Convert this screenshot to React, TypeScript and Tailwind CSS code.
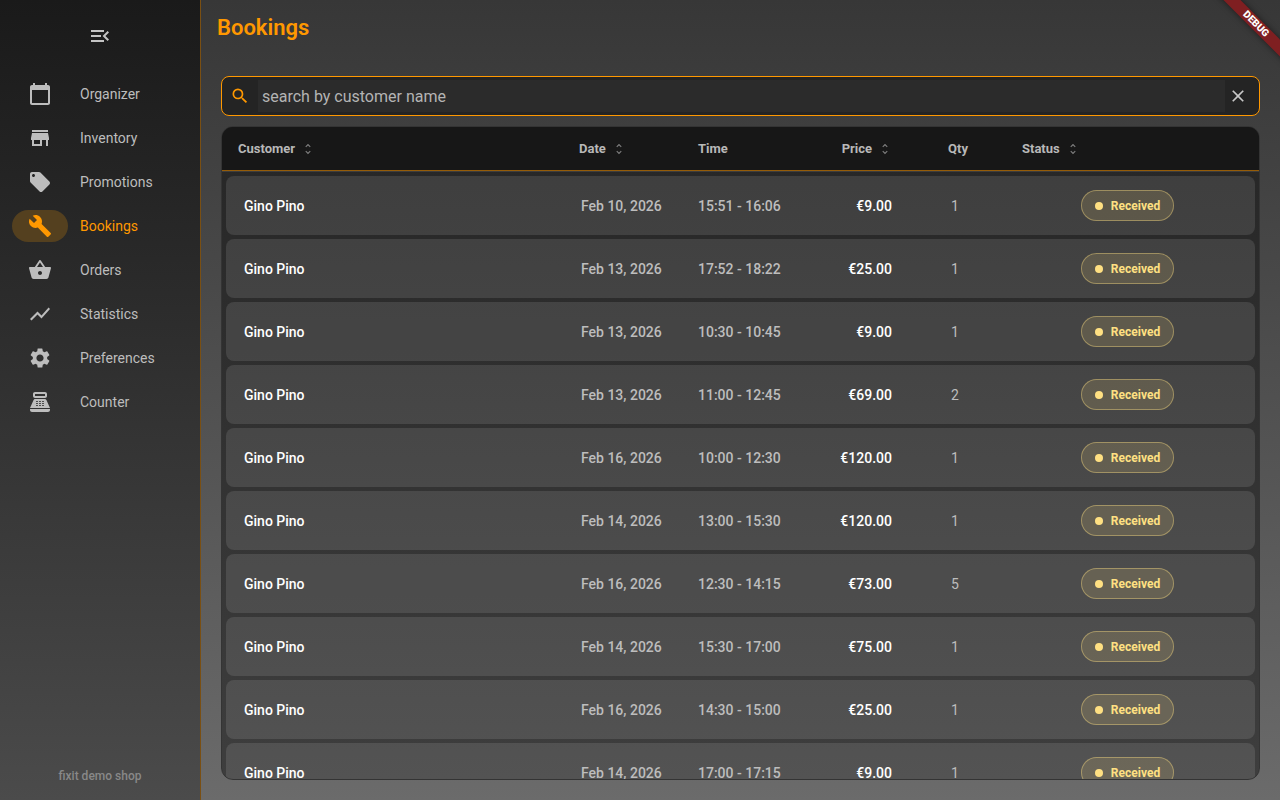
import type { IconType } from "react-icons";
import {
  MdBuild,
  MdCalendarToday,
  MdClose,
  MdLocalOffer,
  MdMenuOpen,
  MdPointOfSale,
  MdSearch,
  MdSettings,
  MdShoppingBasket,
  MdShowChart,
  MdStore,
  MdUnfoldMore,
} from "react-icons/md";

type TBooking = {
  customer: string;
  date: string;
  time: string;
  price: string;
  qty: number;
  status: string;
};

const navItems: { label: string; icon: IconType; active?: boolean }[] = [
  { label: "Organizer", icon: MdCalendarToday },
  { label: "Inventory", icon: MdStore },
  { label: "Promotions", icon: MdLocalOffer },
  { label: "Bookings", icon: MdBuild, active: true },
  { label: "Orders", icon: MdShoppingBasket },
  { label: "Statistics", icon: MdShowChart },
  { label: "Preferences", icon: MdSettings },
  { label: "Counter", icon: MdPointOfSale },
];

const bookings: TBooking[] = [
  { customer: "Gino Pino", date: "Feb 10, 2026", time: "15:51 - 16:06", price: "€9.00", qty: 1, status: "Received" },
  { customer: "Gino Pino", date: "Feb 13, 2026", time: "17:52 - 18:22", price: "€25.00", qty: 1, status: "Received" },
  { customer: "Gino Pino", date: "Feb 13, 2026", time: "10:30 - 10:45", price: "€9.00", qty: 1, status: "Received" },
  { customer: "Gino Pino", date: "Feb 13, 2026", time: "11:00 - 12:45", price: "€69.00", qty: 2, status: "Received" },
  { customer: "Gino Pino", date: "Feb 16, 2026", time: "10:00 - 12:30", price: "€120.00", qty: 1, status: "Received" },
  { customer: "Gino Pino", date: "Feb 14, 2026", time: "13:00 - 15:30", price: "€120.00", qty: 1, status: "Received" },
  { customer: "Gino Pino", date: "Feb 16, 2026", time: "12:30 - 14:15", price: "€73.00", qty: 5, status: "Received" },
  { customer: "Gino Pino", date: "Feb 14, 2026", time: "15:30 - 17:00", price: "€75.00", qty: 1, status: "Received" },
  { customer: "Gino Pino", date: "Feb 16, 2026", time: "14:30 - 15:00", price: "€25.00", qty: 1, status: "Received" },
  { customer: "Gino Pino", date: "Feb 14, 2026", time: "17:00 - 17:15", price: "€9.00", qty: 1, status: "Received" },
];

// header and body rows share the same columns
const columns =
  "grid grid-cols-[341fr_119fr_102fr_92fr_120fr_231fr] items-center";

const SortButton = ({ label }: { label: string }) => (
  <button type="button" className="inline-flex items-center gap-1.5">
    {label}
    <MdUnfoldMore className="size-3.5 text-[#7c7c7c]" />
  </button>
);

const Sidebar = () => {
  return (
    <aside className="flex w-[201px] shrink-0 flex-col border-r border-[#7a4f12] bg-linear-to-b from-[#1a1a1a] to-[#4b4b4b]">
      <button
        type="button"
        aria-label="Collapse menu"
        className="mx-auto mt-6 text-[#c4c4c4]"
      >
        <MdMenuOpen className="size-6" />
      </button>
      <nav className="mt-6 flex flex-col">
        {navItems.map(({ label, icon: Icon, active }) => (
          <a
            key={label}
            href="#"
            className={`flex h-11 items-center gap-3 pl-3 text-sm ${
              active ? "text-[#ff9800]" : "text-[#bdbdbd]"
            }`}
          >
            <span
              className={`flex h-8 w-14 items-center justify-center rounded-full ${
                active ? "bg-[#54401f]" : ""
              }`}
            >
              <Icon className="size-6" />
            </span>
            {label}
          </a>
        ))}
      </nav>
      <p className="mt-auto mb-4 text-center text-xs font-medium text-[#888888]">
        fixit demo shop
      </p>
    </aside>
  );
};

const SearchBar = () => {
  return (
    <div className="flex h-10 items-center rounded-lg border border-[#ff9800] bg-[#242424]">
      <label htmlFor="search" className="flex w-9 justify-center text-[#ff9800]">
        <MdSearch className="size-5" />
      </label>
      <input
        id="search"
        type="text"
        placeholder="search by customer name"
        className="h-8 min-w-0 flex-1 bg-[#2b2b2b] px-1 text-base text-[#e0e0e0] outline-none placeholder:text-[#b4b4b4]"
      />
      <button
        type="button"
        aria-label="Clear search"
        className="flex w-[34px] justify-center pr-2 text-[#c8c8c8]"
      >
        <MdClose className="size-5" />
      </button>
    </div>
  );
};

const BookingsTable = () => {
  return (
    <div className="mt-2.5 min-h-0 flex-1 overflow-y-auto rounded-xl border border-[#343434] bg-linear-to-b from-[#262626] to-[#3e3e3e] [scrollbar-width:none]">
      <table className="block">
        <thead className="block border-b border-[#955c08] bg-[#171717]">
          <tr className={`${columns} h-[43px] px-4 text-left text-[13px] text-[#b8b8b8]`}>
            <th>
              <SortButton label="Customer" />
            </th>
            <th>
              <SortButton label="Date" />
            </th>
            <th>Time</th>
            <th className="text-right">
              <SortButton label="Price" />
            </th>
            <th className="pl-3 text-center">Qty</th>
            <th className="pl-2.5">
              <SortButton label="Status" />
            </th>
          </tr>
        </thead>
        <tbody className="flex flex-col gap-1 border-t border-[#3d3d3d] p-1">
          {bookings.map((item, index) => (
            <tr
              key={index}
              className={`${columns} h-[59px] rounded-lg bg-white/11 px-3 text-sm text-[#bdbdbd]`}
            >
              <td className="pl-1.5 font-medium text-white">{item.customer}</td>
              <td className="pl-0.5 font-medium">{item.date}</td>
              <td className="font-medium">{item.time}</td>
              <td className="text-right font-medium text-white">{item.price}</td>
              <td className="pl-1.5 text-center">{item.qty}</td>
              <td className="flex justify-center">
                <span className="flex h-[31px] items-center gap-2 rounded-full border border-[#ffe082]/40 bg-[#ffe082]/15 px-[13px] text-xs font-bold text-[#ffe082]">
                  <span className="size-2 rounded-full bg-[#ffe082]" />
                  {item.status}
                </span>
              </td>
            </tr>
          ))}
        </tbody>
      </table>
    </div>
  );
};

const App = () => {
  return (
    <div className="relative flex h-screen overflow-hidden font-[Roboto,sans-serif]">
      <Sidebar />
      <main className="flex min-w-0 flex-1 flex-col bg-linear-to-b from-[#373737] to-[#6b6b6b]">
        <h1 className="px-4 pt-3 text-[22px] leading-8 font-semibold text-[#ff9800]">
          Bookings
        </h1>
        <div className="mt-8 flex min-h-0 flex-1 flex-col px-5 pb-5">
          <SearchBar />
          <BookingsTable />
        </div>
      </main>
      {/* corner ribbon */}
      <div className="pointer-events-none absolute top-0 right-0 size-20 overflow-hidden">
        <div className="absolute top-[18px] -right-9 h-3 w-30 rotate-45 bg-[#7f1f21] text-center text-[10px] leading-3 font-black text-white shadow-[0_0_6px_rgba(0,0,0,0.5)]">
          DEBUG
        </div>
      </div>
    </div>
  );
};

export default App;
